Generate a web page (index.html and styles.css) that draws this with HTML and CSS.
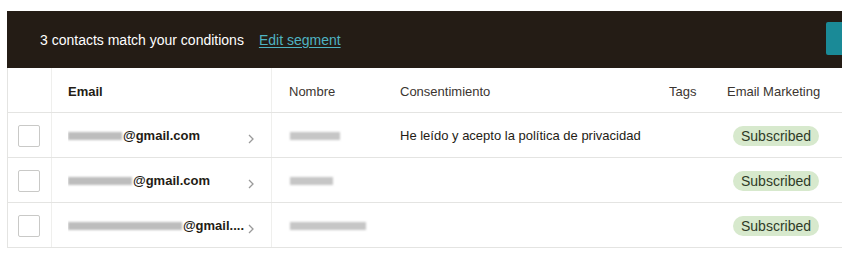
FILE: index.html
```html
<!DOCTYPE html>
<html>
<head>
<meta charset="utf-8">
<link rel="stylesheet" href="styles.css">
</head>
<body>
<div class="page">
  <div class="banner">
    <span class="banner-text">3 contacts match your conditions</span>
    <a class="banner-link" href="#">Edit segment</a>
    <span class="banner-btn"></span>
  </div>
  <div class="table">
    <div class="row head">
      <div class="cell c-check"></div>
      <div class="cell c-email strong">Email</div>
      <div class="cell c-name">Nombre</div>
      <div class="cell c-consent">Consentimiento</div>
      <div class="cell c-tags">Tags</div>
      <div class="cell c-mkt">Email Marketing</div>
    </div>
    <div class="row">
      <div class="cell c-check"><span class="box"></span></div>
      <div class="cell c-email"><span class="email"><span class="blur w80"></span>@gmail.com</span><svg class="chev" viewBox="0 0 6 10" width="6" height="10"><path d="M1 1l4 4-4 4" fill="none" stroke="#9a9a9a" stroke-width="1.3"/></svg></div>
      <div class="cell c-name"><span class="blur w50"></span></div>
      <div class="cell c-consent">He leído y acepto la política de privacidad</div>
      <div class="cell c-tags"></div>
      <div class="cell c-mkt"><span class="badge">Subscribed</span></div>
    </div>
    <div class="row">
      <div class="cell c-check"><span class="box"></span></div>
      <div class="cell c-email"><span class="email"><span class="blur w65"></span>@gmail.com</span><svg class="chev" viewBox="0 0 6 10" width="6" height="10"><path d="M1 1l4 4-4 4" fill="none" stroke="#9a9a9a" stroke-width="1.3"/></svg></div>
      <div class="cell c-name"><span class="blur w44"></span></div>
      <div class="cell c-consent"></div>
      <div class="cell c-tags"></div>
      <div class="cell c-mkt"><span class="badge">Subscribed</span></div>
    </div>
    <div class="row">
      <div class="cell c-check"><span class="box"></span></div>
      <div class="cell c-email"><span class="email"><span class="blur w118"></span>@gmail....</span><svg class="chev" viewBox="0 0 6 10" width="6" height="10"><path d="M1 1l4 4-4 4" fill="none" stroke="#9a9a9a" stroke-width="1.3"/></svg></div>
      <div class="cell c-name"><span class="blur w78"></span></div>
      <div class="cell c-consent"></div>
      <div class="cell c-tags"></div>
      <div class="cell c-mkt"><span class="badge">Subscribed</span></div>
    </div>
  </div>
</div>
</body>
</html>
```

FILE: styles.css
```css
html, body {
  margin: 0;
  background: #ffffff;
  overflow: hidden;
}
body {
  font-family: "Liberation Sans", Arial, sans-serif;
  color: #241c15;
  font-size: 13px;
}
.page {
  padding: 11px 0 0 7px;
  width: 860px;
}
.banner {
  height: 57px;
  background: #241c15;
  display: flex;
  align-items: center;
  padding-left: 33px;
}
.banner-text {
  color: #ffffff;
  font-size: 14px;
}
.banner-link {
  color: #4fb3c2;
  font-size: 14px;
  margin-left: 15px;
  text-decoration: underline;
  text-underline-offset: 2px;
}
.banner-btn {
  margin-left: auto;
  margin-right: 1px;
  width: 40px;
  height: 33px;
  margin-top: -3px;
  background: #1a8a97;
  border-radius: 2px;
}
.table {
  border-left: 1px solid #e4e4e2;
}
.row {
  display: grid;
  grid-template-columns: 44px 220px 111px 269px 58px 1fr;
  height: 45px;
  box-sizing: border-box;
  border-bottom: 1px solid #e4e4e2;
}
.cell {
  display: flex;
  align-items: center;
  padding-left: 17px;
  padding-top: 1px;
  white-space: nowrap;
  overflow: hidden;
}
.head .cell { padding-top: 3px; }
.c-check {
  padding-left: 10px;
  border-right: 1px solid #efefed;
}
.c-email {
  border-right: 1px solid #efefed;
  padding-left: 16px;
  padding-right: 17px;
}
.head .cell { color: #3b3530; }
.head .strong { color: #241c15; font-weight: bold; }
.email {
  display: flex;
  align-items: center;
  flex: 1;
  overflow: hidden;
  font-weight: bold;
  color: #241c15;
}
.chev {
  margin-left: 4px;
  margin-top: 6px;
  flex: none;
}
.box {
  width: 20px;
  height: 20px;
  border: 1px solid #c9c9c7;
  border-radius: 2px;
  background: #fff;
}
.blur {
  display: inline-block;
  height: 8px;
  background: #bdbdbd;
  filter: blur(1.2px);
  margin-right: 1px;
}
.w80 { width: 54px; }
.w65 { width: 64px; }
.w118 { width: 118px; }
.w50 { width: 50px; }
.w44 { width: 43px; }
.w78 { width: 76px; }
.c-name .blur { margin-left: 1px; background: #c6c6c6; }
.c-consent { color: #241c15; }
.c-mkt { padding-left: 23px; }
.head .c-mkt { padding-left: 17px; }
.badge {
  display: inline-block;
  height: 20px;
  line-height: 20px;
  padding: 0 8px;
  border-radius: 10px;
  background: #d7e9cd;
  color: #2f3b27;
  font-size: 14px;
}
```
